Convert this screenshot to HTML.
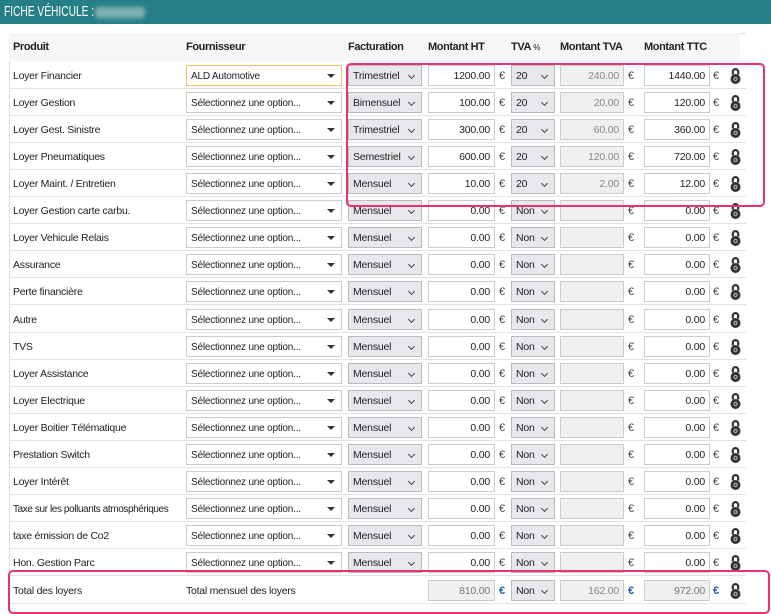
<!DOCTYPE html>
<html><head><meta charset="utf-8"><style>
*{box-sizing:border-box;margin:0;padding:0}
body{width:771px;height:606px;overflow:hidden;background:#fff;font-family:"Liberation Sans",sans-serif;font-size:10.5px;color:#222;position:relative}
.top{position:absolute;left:0;top:0;width:771px;height:24px;background:#267f86}
.ttl{position:absolute;left:4px;top:3px;color:#fff;font-size:15px;line-height:18px;transform:scaleX(0.68);transform-origin:0 0;white-space:nowrap}
.blur{position:absolute;left:95px;top:7px;width:50px;height:11px;background:#7fb0b4;border-radius:4px;filter:blur(2px)}
.frame{position:absolute;left:9px;top:33px;width:737px;height:580px;border-left:1px solid #ddd;border-top:1px solid #ddd}
.hdr{position:absolute;left:9px;top:33px;width:731px;height:28px;background:#f7f7f7;font-weight:bold;font-size:11px}
.hdr span{position:absolute;top:8px;letter-spacing:-0.4px}
.row{position:absolute;left:9px;width:737px;height:27px;border-bottom:1px solid #e3e3e3}
.row>*{position:absolute}
.lb{left:4px;top:1px;line-height:27px;letter-spacing:-0.25px;white-space:nowrap}
.b{top:3px;height:21px;line-height:21px;border:1px solid #ccc;background:#fff;padding:0 4px;font-size:10.5px;letter-spacing:-0.2px;white-space:nowrap;overflow:hidden}
.fs{left:177px;width:156px;font-size:10px}
.fs:after{content:"";position:absolute;right:6px;top:8px;border:4px solid transparent;border-top:4px solid #333;border-bottom:0}
.fa{left:339px;width:74px;background:#e8e8ec;border-color:#bbb}
.tv{left:502px;width:44px;background:#e8e8ec;border-color:#bbb}
.fa:after,.tv:after{content:"";position:absolute;right:7px;top:7px;width:4px;height:4px;border-right:1.3px solid #444;border-bottom:1.3px solid #444;transform:rotate(45deg)}
.ht{left:419px;width:67px;text-align:right}
.mt{left:551px;width:64px;text-align:right;background:#f0f0f0;color:#888}
.tt{left:635px;width:66px;text-align:right}
.e{top:1px;line-height:27px;font-size:11px;color:#444}
.e1{left:490px}.e2{left:619px}.e3{left:704px}
.lk{left:721px;top:5px}
.pink{position:absolute;border:2px solid #e8336b;border-radius:5px}
</style></head><body>
<div class="top"><div class="ttl">FICHE VÉHICULE :</div></div><div class="blur"></div>
<div class="frame"></div>
<div class="hdr"><span style="left:4px">Produit</span><span style="left:177px">Fournisseur</span><span style="left:339px">Facturation</span><span style="left:419px">Montant HT</span><span style="left:502px">TVA <small style="font-weight:normal;font-size:8px">%</small></span><span style="left:551px">Montant TVA</span><span style="left:635px">Montant TTC</span></div>

<svg width="0" height="0" style="position:absolute"><defs><g id="lock"><path d="M2.8 7.5V4.8a2.7 2.7 0 0 1 5.4 0V7.5" fill="none" stroke="#333" stroke-width="2.2"/><ellipse cx="5.5" cy="12" rx="5" ry="5" fill="#333"/><circle cx="5.5" cy="12" r="2.2" fill="#aaa"/><circle cx="5.5" cy="12" r="1" fill="#333"/></g></defs></svg>

<div class="row" style="top:62px"><div class="lb">Loyer Financier</div><div class="b fs" style="border-color:#f5c170">ALD Automotive</div><div class="b fa">Trimestriel</div><div class="b ht">1200.00</div><div class="e e1">€</div><div class="b tv">20</div><div class="b mt">240.00</div><div class="e e2">€</div><div class="b tt">1440.00</div><div class="e e3">€</div><svg class="lk" width="11" height="17"><use href="#lock"/></svg></div>
<div class="row" style="top:89px"><div class="lb">Loyer Gestion</div><div class="b fs">Sélectionnez une option...</div><div class="b fa">Bimensuel</div><div class="b ht">100.00</div><div class="e e1">€</div><div class="b tv">20</div><div class="b mt">20.00</div><div class="e e2">€</div><div class="b tt">120.00</div><div class="e e3">€</div><svg class="lk" width="11" height="17"><use href="#lock"/></svg></div>
<div class="row" style="top:116px"><div class="lb">Loyer Gest. Sinistre</div><div class="b fs">Sélectionnez une option...</div><div class="b fa">Trimestriel</div><div class="b ht">300.00</div><div class="e e1">€</div><div class="b tv">20</div><div class="b mt">60.00</div><div class="e e2">€</div><div class="b tt">360.00</div><div class="e e3">€</div><svg class="lk" width="11" height="17"><use href="#lock"/></svg></div>
<div class="row" style="top:143px"><div class="lb">Loyer Pneumatiques</div><div class="b fs">Sélectionnez une option...</div><div class="b fa">Semestriel</div><div class="b ht">600.00</div><div class="e e1">€</div><div class="b tv">20</div><div class="b mt">120.00</div><div class="e e2">€</div><div class="b tt">720.00</div><div class="e e3">€</div><svg class="lk" width="11" height="17"><use href="#lock"/></svg></div>
<div class="row" style="top:170px"><div class="lb">Loyer Maint. / Entretien</div><div class="b fs">Sélectionnez une option...</div><div class="b fa">Mensuel</div><div class="b ht">10.00</div><div class="e e1">€</div><div class="b tv">20</div><div class="b mt">2.00</div><div class="e e2">€</div><div class="b tt">12.00</div><div class="e e3">€</div><svg class="lk" width="11" height="17"><use href="#lock"/></svg></div>
<div class="row" style="top:197px"><div class="lb">Loyer Gestion carte carbu.</div><div class="b fs">Sélectionnez une option...</div><div class="b fa">Mensuel</div><div class="b ht">0.00</div><div class="e e1">€</div><div class="b tv">Non</div><div class="b mt"></div><div class="e e2">€</div><div class="b tt">0.00</div><div class="e e3">€</div><svg class="lk" width="11" height="17"><use href="#lock"/></svg></div>
<div class="row" style="top:224px"><div class="lb">Loyer Vehicule Relais</div><div class="b fs">Sélectionnez une option...</div><div class="b fa">Mensuel</div><div class="b ht">0.00</div><div class="e e1">€</div><div class="b tv">Non</div><div class="b mt"></div><div class="e e2">€</div><div class="b tt">0.00</div><div class="e e3">€</div><svg class="lk" width="11" height="17"><use href="#lock"/></svg></div>
<div class="row" style="top:251px"><div class="lb">Assurance</div><div class="b fs">Sélectionnez une option...</div><div class="b fa">Mensuel</div><div class="b ht">0.00</div><div class="e e1">€</div><div class="b tv">Non</div><div class="b mt"></div><div class="e e2">€</div><div class="b tt">0.00</div><div class="e e3">€</div><svg class="lk" width="11" height="17"><use href="#lock"/></svg></div>
<div class="row" style="top:278px"><div class="lb">Perte financière</div><div class="b fs">Sélectionnez une option...</div><div class="b fa">Mensuel</div><div class="b ht">0.00</div><div class="e e1">€</div><div class="b tv">Non</div><div class="b mt"></div><div class="e e2">€</div><div class="b tt">0.00</div><div class="e e3">€</div><svg class="lk" width="11" height="17"><use href="#lock"/></svg></div>
<div class="row" style="top:306px"><div class="lb">Autre</div><div class="b fs">Sélectionnez une option...</div><div class="b fa">Mensuel</div><div class="b ht">0.00</div><div class="e e1">€</div><div class="b tv">Non</div><div class="b mt"></div><div class="e e2">€</div><div class="b tt">0.00</div><div class="e e3">€</div><svg class="lk" width="11" height="17"><use href="#lock"/></svg></div>
<div class="row" style="top:333px"><div class="lb">TVS</div><div class="b fs">Sélectionnez une option...</div><div class="b fa">Mensuel</div><div class="b ht">0.00</div><div class="e e1">€</div><div class="b tv">Non</div><div class="b mt"></div><div class="e e2">€</div><div class="b tt">0.00</div><div class="e e3">€</div><svg class="lk" width="11" height="17"><use href="#lock"/></svg></div>
<div class="row" style="top:360px"><div class="lb">Loyer Assistance</div><div class="b fs">Sélectionnez une option...</div><div class="b fa">Mensuel</div><div class="b ht">0.00</div><div class="e e1">€</div><div class="b tv">Non</div><div class="b mt"></div><div class="e e2">€</div><div class="b tt">0.00</div><div class="e e3">€</div><svg class="lk" width="11" height="17"><use href="#lock"/></svg></div>
<div class="row" style="top:387px"><div class="lb">Loyer Electrique</div><div class="b fs">Sélectionnez une option...</div><div class="b fa">Mensuel</div><div class="b ht">0.00</div><div class="e e1">€</div><div class="b tv">Non</div><div class="b mt"></div><div class="e e2">€</div><div class="b tt">0.00</div><div class="e e3">€</div><svg class="lk" width="11" height="17"><use href="#lock"/></svg></div>
<div class="row" style="top:414px"><div class="lb">Loyer Boitier Télématique</div><div class="b fs">Sélectionnez une option...</div><div class="b fa">Mensuel</div><div class="b ht">0.00</div><div class="e e1">€</div><div class="b tv">Non</div><div class="b mt"></div><div class="e e2">€</div><div class="b tt">0.00</div><div class="e e3">€</div><svg class="lk" width="11" height="17"><use href="#lock"/></svg></div>
<div class="row" style="top:441px"><div class="lb">Prestation Switch</div><div class="b fs">Sélectionnez une option...</div><div class="b fa">Mensuel</div><div class="b ht">0.00</div><div class="e e1">€</div><div class="b tv">Non</div><div class="b mt"></div><div class="e e2">€</div><div class="b tt">0.00</div><div class="e e3">€</div><svg class="lk" width="11" height="17"><use href="#lock"/></svg></div>
<div class="row" style="top:468px"><div class="lb">Loyer Intérêt</div><div class="b fs">Sélectionnez une option...</div><div class="b fa">Mensuel</div><div class="b ht">0.00</div><div class="e e1">€</div><div class="b tv">Non</div><div class="b mt"></div><div class="e e2">€</div><div class="b tt">0.00</div><div class="e e3">€</div><svg class="lk" width="11" height="17"><use href="#lock"/></svg></div>
<div class="row" style="top:495px"><div class="lb" style="font-size:10px;letter-spacing:-0.4px">Taxe sur les polluants atmosphériques</div><div class="b fs">Sélectionnez une option...</div><div class="b fa">Mensuel</div><div class="b ht">0.00</div><div class="e e1">€</div><div class="b tv">Non</div><div class="b mt"></div><div class="e e2">€</div><div class="b tt">0.00</div><div class="e e3">€</div><svg class="lk" width="11" height="17"><use href="#lock"/></svg></div>
<div class="row" style="top:522px"><div class="lb">taxe émission de Co2</div><div class="b fs">Sélectionnez une option...</div><div class="b fa">Mensuel</div><div class="b ht">0.00</div><div class="e e1">€</div><div class="b tv">Non</div><div class="b mt"></div><div class="e e2">€</div><div class="b tt">0.00</div><div class="e e3">€</div><svg class="lk" width="11" height="17"><use href="#lock"/></svg></div>
<div class="row" style="top:549px"><div class="lb">Hon. Gestion Parc</div><div class="b fs">Sélectionnez une option...</div><div class="b fa">Mensuel</div><div class="b ht">0.00</div><div class="e e1">€</div><div class="b tv">Non</div><div class="b mt"></div><div class="e e2">€</div><div class="b tt">0.00</div><div class="e e3">€</div><svg class="lk" width="11" height="17"><use href="#lock"/></svg></div>
<div class="row" style="top:577px"><div class="lb">Total des loyers</div><div class="lb" style="left:177px">Total mensuel des loyers</div><div class="b ht" style="background:#f0f0f0;color:#777">810.00</div><div class="e e1" style="color:#2a5db0;font-weight:bold">€</div><div class="b tv">Non</div><div class="b mt">162.00</div><div class="e e2" style="color:#2a5db0;font-weight:bold">€</div><div class="b tt" style="background:#f0f0f0;color:#777">972.00</div><div class="e e3" style="color:#2a5db0;font-weight:bold">€</div><svg class="lk" width="11" height="17"><use href="#lock"/></svg></div>

<div class="pink" style="left:346px;top:63px;width:419px;height:144px"></div>
<div class="pink" style="left:8px;top:570px;width:762px;height:44px"></div>
</body></html>
